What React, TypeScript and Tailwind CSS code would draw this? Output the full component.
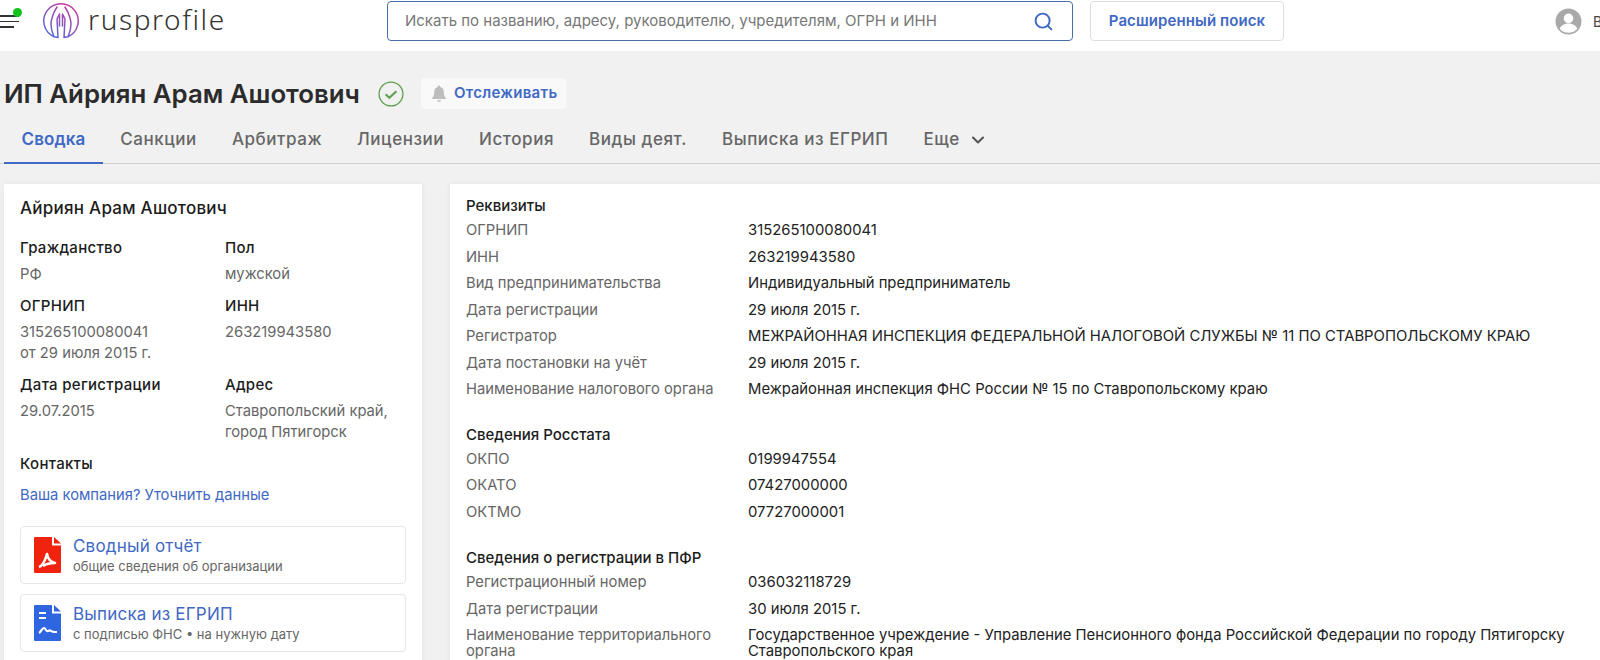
import { Search, ChevronDown } from "lucide-react";

const tabs = ["Санкции", "Арбитраж", "Лицензии", "История", "Виды деят.", "Выписка из ЕГРИП"];

const requisites = [
  ["ОГРНИП", "315265100080041"],
  ["ИНН", "263219943580"],
  ["Вид предпринимательства", "Индивидуальный предприниматель"],
  ["Дата регистрации", "29 июля 2015 г."],
  ["Регистратор", "МЕЖРАЙОННАЯ ИНСПЕКЦИЯ ФЕДЕРАЛЬНОЙ НАЛОГОВОЙ СЛУЖБЫ № 11 ПО СТАВРОПОЛЬСКОМУ КРАЮ"],
  ["Дата постановки на учёт", "29 июля 2015 г."],
  ["Наименование налогового органа", "Межрайонная инспекция ФНС России № 15 по Ставропольскому краю"],
];

const rosstat = [
  ["ОКПО", "0199947554"],
  ["ОКАТО", "07427000000"],
  ["ОКТМО", "07727000001"],
];

const pfr = [
  ["Регистрационный номер", "036032118729"],
  ["Дата регистрации", "30 июля 2015 г."],
  [
    "Наименование территориального органа",
    "Государственное учреждение - Управление Пенсионного фонда Российской Федерации по городу Пятигорску Ставропольского края",
  ],
];

const Logo = () => (
  <svg width="38" height="38" viewBox="0 0 38 38" fill="none">
    <defs>
      <linearGradient id="logoGrad" x1="30" y1="2" x2="6" y2="36" gradientUnits="userSpaceOnUse">
        <stop stopColor="#d0379b" />
        <stop offset="1" stopColor="#4a6fe0" />
      </linearGradient>
    </defs>
    <path
      d="M12 34.700A17.2 17.2 0 1 1 26 34.700M12 34.700C9 28 8 22 10 16C11 12 13 8 15 5M26 34.700C29 28 30 22 28 16C27 12 25 8 23 5M16 35.500L15 17L17.500 12V24M22 35.500L23 17L20.500 12V24M12 34.700L16 35.500M26 34.700L22 35.500"
      stroke="url(#logoGrad)"
      strokeWidth="1.5"
      strokeLinejoin="round"
      strokeLinecap="round"
    />
  </svg>
);

const Row = ({ label, value }: { label: string; value: string }) => (
  <div className="flex items-start">
    <div className="w-[282px] shrink-0 py-[5.25px] pr-6 text-[14.75px] leading-[16px] text-[#666]">{label}</div>
    <div className="py-[5.25px] text-[14.85px] leading-[16px] text-[#222]">{value}</div>
  </div>
);

const Field = ({ label, children }: { label: string; children: React.ReactNode }) => (
  <div>
    <div className="text-[15px] font-medium leading-5 tracking-[0.3px] text-[#1c1c1c]">{label}</div>
    <div className="mt-[6px] text-[14.75px] leading-[21px] text-[#666]">{children}</div>
  </div>
);

const ReportCard = ({
  icon,
  title,
  sub,
}: {
  icon: React.ReactNode;
  title: string;
  sub: string;
}) => (
  <div className="flex h-[58px] items-center gap-3 rounded border border-[#e6e6e6] pl-[13px]">
    {icon}
    <div>
      <div className="text-[17px] leading-5 tracking-[0.2px] text-[#3f69c4]">{title}</div>
      <div className="mt-[2px] text-[13px] leading-4 text-[#666]">{sub}</div>
    </div>
  </div>
);

export default function App() {
  return (
    <div
      className="h-[660px] w-[1600px] overflow-hidden bg-[#f1f1f1] text-[15px]"
      style={{ fontFamily: "Inter, 'Noto Sans', sans-serif" }}
    >
      <header className="flex h-[51px] items-center bg-white pb-[9px]">
        <div className="relative ml-0 h-4 w-5">
          <div className="mt-[2px] h-[1.5px] w-[19px] bg-[#333]" />
          <div className="mt-[4px] h-[1.5px] w-[19px] bg-[#333]" />
          <div className="mt-[4px] h-[1.5px] w-[14px] bg-[#333]" />
          <div className="absolute -top-[5px] left-[13px] h-[9px] w-[9px] rounded-full bg-[#12c21e]" />
        </div>
        <div className="ml-[23px] flex items-center">
          <Logo />
          <span
            className="-mt-1 ml-[8px] w-[137px] text-[28px] font-light leading-8 tracking-[1.6px] text-[#333]"
            style={{ fontFamily: "'Noto Sans', sans-serif" }}
          >
            rusprofile
          </span>
        </div>
        <div className="ml-[162px] flex h-[40px] w-[686px] shrink-0 items-center justify-between rounded border border-[#4a6fa8] pl-[17px] pr-[18px]">
          <span className="text-[15px] text-[#777]">Искать по названию, адресу, руководителю, учредителям, ОГРН и ИНН</span>
          <Search className="h-[21px] w-[21px] text-[#3f69c4]" strokeWidth={2.25} />
        </div>
        <div className="ml-[17px] flex h-[40px] w-[194px] shrink-0 items-center justify-center rounded border border-[#dedede] text-[15px] font-semibold tracking-[0.1px] text-[#3f69c4]">
          Расширенный поиск
        </div>
        <svg className="ml-[271px] shrink-0" width="27" height="27" viewBox="0 0 26 26">
          <circle cx="13" cy="13" r="12.5" fill="#a9a9a9" />
          <circle cx="13" cy="10" r="4.6" fill="#fff" />
          <path d="M4.5 20c1.5-3.6 5-5 8.500-5s7 1.400 8.500 5c-2 2.400-5 3.800-8.500 3.800S6.500 22.400 4.500 20z" fill="#fff" />
        </svg>
        <span className="ml-[11px] text-[14px] text-[#444]">В</span>
      </header>

      <div className="mt-[26px] flex h-[33px] items-center pl-1">
        <h1 className="text-[25.8px] font-semibold leading-8 text-[#2b2b2b]">ИП Айриян Арам Ашотович</h1>
        <svg className="ml-[18px]" width="26" height="26" viewBox="0 0 24 24" fill="none">
          <circle cx="12" cy="12" r="11" stroke="#5fa04e" strokeWidth="1.2" />
          <path d="M7 12.200l3.500 3.200 6.500-6" stroke="#5fa04e" strokeWidth="2" />
        </svg>
        <div className="ml-[17px] flex h-[31px] w-[145px] items-center rounded bg-[#f9f9f9] pl-[10px]">
          <svg width="16" height="17" viewBox="0 0 16 17" fill="#bdbdbd">
            <path d="M8 0.500c.8 0 1.300.600 1.300 1.400 2.300.600 3.500 2.500 3.500 5 0 3 .6 4.500 2 6v1H1.200v-1c1.400-1.500 2-3 2-6 0-2.500 1.200-4.400 3.500-5C6.700 1.100 7.200.500 8 .500zM6 15.200h4c0 1-.9 1.600-2 1.600s-2-.6-2-1.600z" />
          </svg>
          <span className="ml-[7px] text-[15px] font-semibold tracking-[0.3px] text-[#3f69c4]">Отслеживать</span>
        </div>
      </div>

      <nav className="mt-[8px] flex h-[46px] items-start border-b border-[#cfcfcf] pl-1 text-[17px] font-medium tracking-[0.55px] text-[#666]">
        <div className="flex h-[46px] items-center border-b-2 border-[#3f69c4] px-[17.5px] font-semibold tracking-[0.1px] text-[#3f69c4]">Сводка</div>
        {tabs.map((t) => (
          <div key={t} className="flex h-[44px] items-center px-[17.5px]">{t}</div>
        ))}
        <div className="flex h-[44px] items-center gap-2 px-[17.5px]">
          Еще
          <ChevronDown className="h-5 w-5 text-[#555]" strokeWidth={2.5} />
        </div>
      </nav>

      <main className="mt-5 flex items-start pl-1">
        <aside className="h-[500px] w-[418px] shrink-0 bg-white px-4 pt-[14px] shadow-[0_0_6px_rgba(0,0,0,0.06)]">
          <div className="text-[17px] font-medium leading-5 tracking-[0.25px] text-[#1c1c1c]">Айриян Арам Ашотович</div>
          <div className="mt-[20px] grid grid-cols-[205px_1fr] gap-y-[11px]">
            <Field label="Гражданство">РФ</Field>
            <Field label="Пол">мужской</Field>
            <Field label="ОГРНИП">
              315265100080041
              <br />
              от 29 июля 2015 г.
            </Field>
            <Field label="ИНН">263219943580</Field>
            <Field label="Дата регистрации">29.07.2015</Field>
            <Field label="Адрес">
              Ставропольский край,
              <br />
              город Пятигорск
            </Field>
          </div>
          <div className="mt-[11px] text-[15px] font-medium leading-5 tracking-[0.3px] text-[#1c1c1c]">Контакты</div>
          <div className="mt-[11px] text-[14.75px] leading-5 text-[#3f69c4]">Ваша компания? Уточнить данные</div>
          <div className="mt-[21px] flex flex-col gap-[10px]">
            <ReportCard
              title="Сводный отчёт"
              sub="общие сведения об организации"
              icon={
                <svg width="27" height="36" viewBox="0 0 27 36">
                  <path d="M1 0h17v8.500h9V35a1 1 0 0 1-1 1H1a1 1 0 0 1-1-1V1a1 1 0 0 1 1-1z" fill="#f0230f" />
                  <path d="M20 0l7 6.500h-7z" fill="#f0230f" />
                  <path d="M5 30c3-1 6-6 8-13 1 5 3 8 8 9-5 0-9 1-12 3" fill="none" stroke="#fff" strokeWidth="2.6" strokeLinejoin="round" />
                </svg>
              }
            />
            <ReportCard
              title="Выписка из ЕГРИП"
              sub="с подписью ФНС • на нужную дату"
              icon={
                <svg width="27" height="36" viewBox="0 0 27 36">
                  <path d="M1 0h17v8.500h9V35a1 1 0 0 1-1 1H1a1 1 0 0 1-1-1V1a1 1 0 0 1 1-1z" fill="#2f66e0" />
                  <path d="M20 0l7 6.500h-7z" fill="#2f66e0" />
                  <path d="M5 8h7M5 13h7" stroke="#fff" strokeWidth="2.2" />
                  <path d="M5 28c2-1 3-5 5-5s1.500 4 4 3 2-1 3 0 3 1 6 1" fill="none" stroke="#fff" strokeWidth="2.2" />
                </svg>
              }
            />
          </div>
        </aside>

        <section className="ml-[28px] h-[500px] flex-1 bg-white pl-4 pr-3 pt-[14px] shadow-[0_0_6px_rgba(0,0,0,0.06)]">
          <h3 className="text-[15px] font-medium leading-4 text-[#1c1c1c]">Реквизиты</h3>
          <div className="mt-[3px]">
            {requisites.map(([l, v], i) => (
              <Row key={i} label={l} value={v} />
            ))}
          </div>
          <h3 className="mt-[24px] text-[15px] font-medium leading-4 text-[#1c1c1c]">Сведения Росстата</h3>
          <div className="mt-[3px]">
            {rosstat.map(([l, v]) => (
              <Row key={l} label={l} value={v} />
            ))}
          </div>
          <h3 className="mt-[25px] text-[15px] font-medium leading-4 text-[#1c1c1c]">Сведения о регистрации в ПФР</h3>
          <div className="mt-[3px]">
            {pfr.map(([l, v]) => (
              <Row key={l} label={l} value={v} />
            ))}
          </div>
        </section>
      </main>
    </div>
  );
}
